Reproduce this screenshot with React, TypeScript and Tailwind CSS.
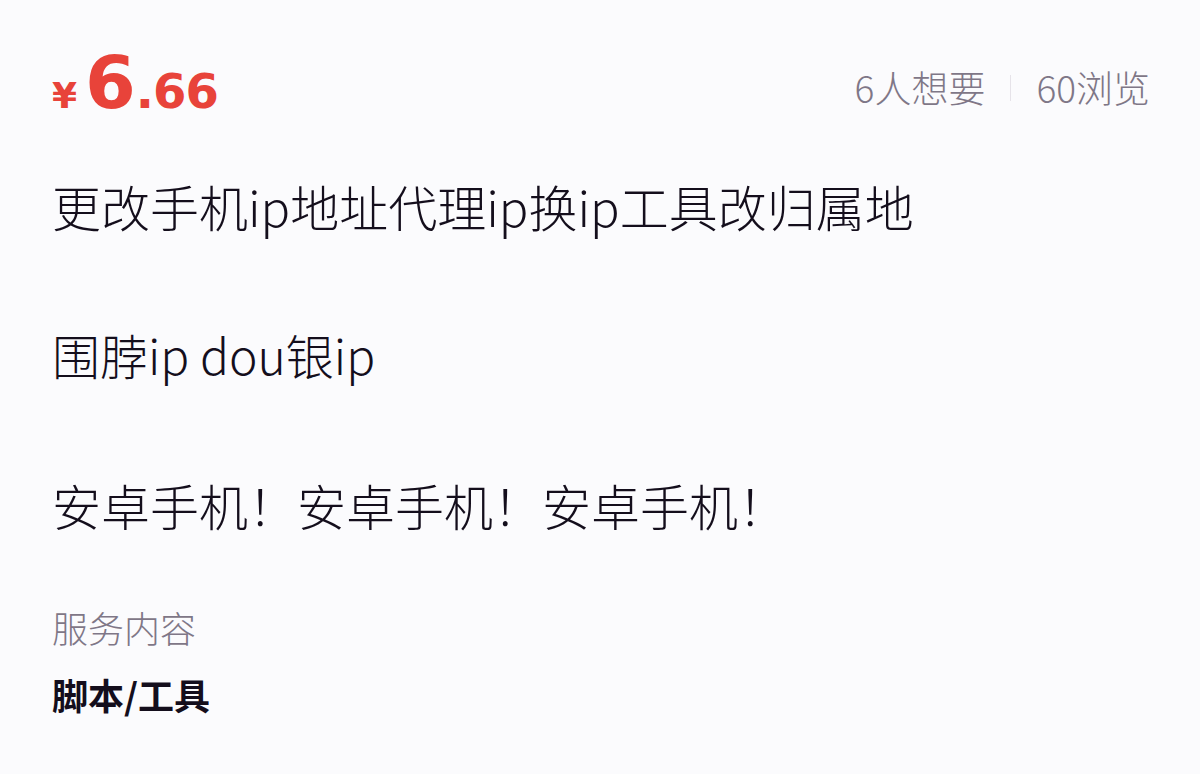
import React from 'react';

const cjk = "font-['Noto_Sans_CJK_SC',sans-serif]";

const App: React.FC = () => {
  return (
    <div className={`w-[1200px] h-[774px] bg-[#fbfbfd] text-[#140e1c] ${cjk} font-light overflow-hidden`}>
      <div className="flex flex-col pl-[52px] pr-[50px] pt-[38px]">
        <div className="flex items-center justify-between h-[100px]">
          <div className="flex items-baseline mb-[12px] text-[#e8433a] font-['DejaVu_Sans',sans-serif] font-bold">
            <span className="text-[36px] leading-none mr-[8px]">¥</span>
            <span className="text-[73px] leading-none">6</span>
            <span className="text-[48px] leading-none tracking-[-1px]">.66</span>
          </div>
          <div className="flex items-center text-[37px] text-[#7f7787]">
            <span>6人想要</span>
            <span className="mx-[25px] h-[26px] w-px bg-[#e6e3e9]" />
            <span>60浏览</span>
          </div>
        </div>

        <p className="mt-[38px] text-[49px] leading-[60px]">更改手机ip地址代理ip换ip工具改归属地</p>
        <p className="mt-[88px] text-[48px] leading-[60px]">围脖ip dou银ip</p>
        <p className="mt-[91px] text-[49px] leading-[60px]">安卓手机！安卓手机！安卓手机！</p>

        <p className="mt-[67px] text-[36px] leading-[50px] text-[#7f7787]">服务内容</p>
        <p className="mt-[17px] text-[36px] leading-[50px] font-bold">脚本/工具</p>
      </div>
    </div>
  );
};

export default App;
